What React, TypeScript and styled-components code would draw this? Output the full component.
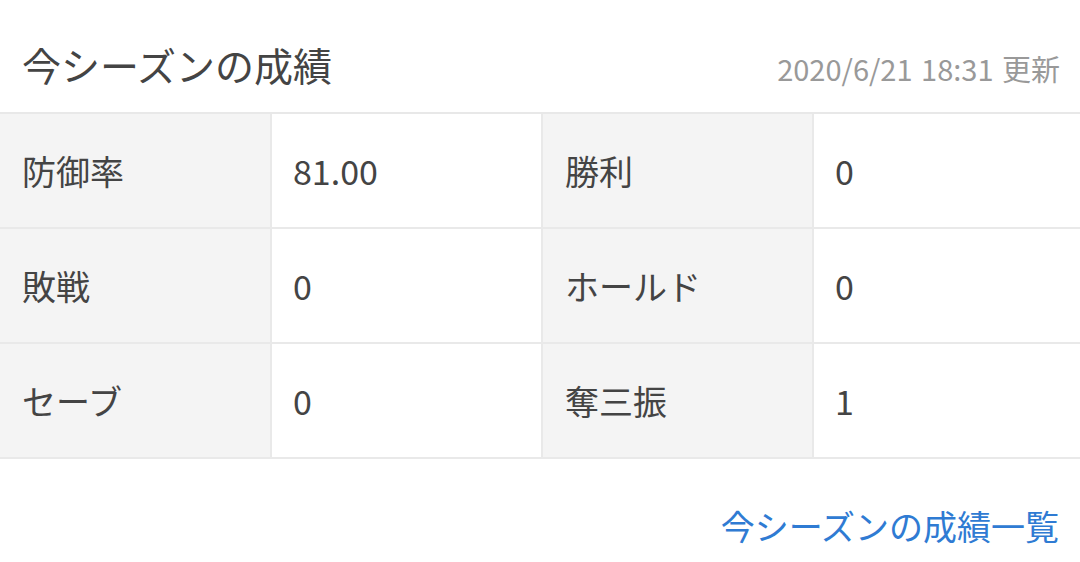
import * as React from 'react';
import styled, { createGlobalStyle } from 'styled-components';

const GlobalStyle = createGlobalStyle`
  html, body {
    margin: 0;
    padding: 0;
    background: #fff;
    font-family: "Noto Sans CJK JP", "Noto Sans", sans-serif;
  }
`;

const Card = styled.section`
  width: 1080px;
  background: #fff;
`;

const Header = styled.header`
  height: 114px;
  box-sizing: border-box;
  display: flex;
  align-items: center;
  justify-content: space-between;
  padding: 16px 20px 0 22px;
  border-bottom: 2px solid #e8e8e8;
`;

const Title = styled.h2`
  margin: 0;
  font-size: 39px;
  font-weight: 400;
  color: #444;
`;

const Updated = styled.span`
  font-size: 29px;
  color: #999;
  margin-top: 8px;
  word-spacing: 2px;
`;

const StatsGrid = styled.div`
  display: grid;
  grid-template-columns: 270px 269px 269px 1fr;
  grid-auto-rows: 113px;
  gap: 2px;
  background: #e9e9e9;
  border-bottom: 2px solid #e9e9e9;
`;

const Cell = styled.div<{ $label?: boolean }>`
  display: flex;
  align-items: center;
  padding-left: ${p => (p.$label ? '22px' : '21px')};
  font-size: 34px;
  color: #444;
  background: ${p => (p.$label ? '#f4f4f4' : '#fff')};
`;

const Footer = styled.footer`
  height: 102px;
  box-sizing: border-box;
  display: flex;
  align-items: center;
  justify-content: flex-end;
  padding: 30px 21px 0 0;
`;

const MoreLink = styled.a`
  font-size: 34px;
  color: #2f7bd3;
  text-decoration: none;
`;

const stats: [string, string][] = [
  ['防御率', '81.00'],
  ['勝利', '0'],
  ['敗戦', '0'],
  ['ホールド', '0'],
  ['セーブ', '0'],
  ['奪三振', '1'],
];

export default function App() {
  return (
    <>
      <GlobalStyle />
      <Card>
        <Header>
          <Title>今シーズンの成績</Title>
          <Updated>2020/6/21 18:31 更新</Updated>
        </Header>
        <StatsGrid>
          {stats.map(([label, value]) => (
            <React.Fragment key={label}>
              <Cell $label>{label}</Cell>
              <Cell>{value}</Cell>
            </React.Fragment>
          ))}
        </StatsGrid>
        <Footer>
          <MoreLink href="#">今シーズンの成績一覧</MoreLink>
        </Footer>
      </Card>
    </>
  );
}
